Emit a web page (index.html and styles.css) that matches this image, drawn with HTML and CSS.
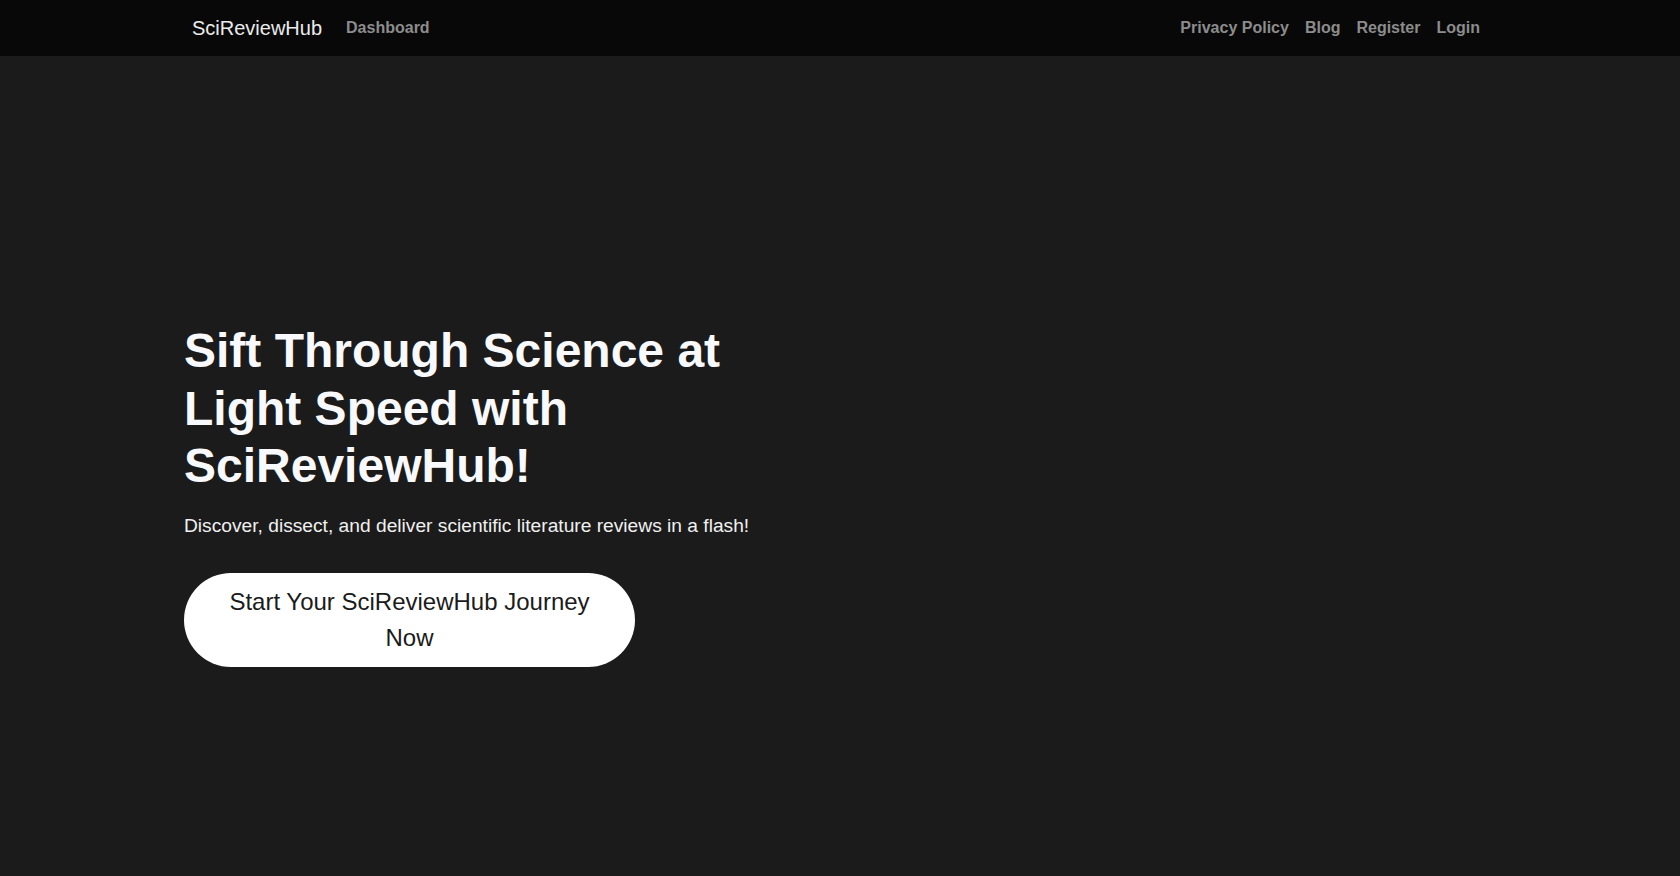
FILE: index.html
```html
<!DOCTYPE html>
<html lang="en">
<head>
<meta charset="utf-8">
<title>SciReviewHub</title>
<link rel="stylesheet" href="styles.css">
</head>
<body>
<nav class="navbar">
  <div class="nav-inner">
    <div class="nav-left">
      <a class="brand" href="#">SciReviewHub</a>
      <a class="nav-link" href="#">Dashboard</a>
    </div>
    <div class="nav-right">
      <a class="nav-link" href="#">Privacy Policy</a>
      <a class="nav-link" href="#">Blog</a>
      <a class="nav-link" href="#">Register</a>
      <a class="nav-link" href="#">Login</a>
    </div>
  </div>
</nav>
<main class="hero">
  <div class="hero-inner">
    <div class="hero-col">
      <h1 class="hero-title">Sift Through Science at Light Speed with SciReviewHub!</h1>
      <p class="hero-lead">Discover, dissect, and deliver scientific literature reviews in a flash!</p>
      <a class="hero-btn" href="#">Start Your SciReviewHub Journey Now</a>
    </div>
  </div>
</main>
</body>
</html>
```
FILE: styles.css
```css
* { box-sizing: border-box; }
html, body { margin: 0; padding: 0; }
body {
  background: #1b1b1b;
  font-family: "Liberation Sans", Arial, sans-serif;
  color: #f8f9fa;
  min-height: 876px;
}
a { text-decoration: none; }
.navbar {
  background: #080808;
  height: 56px;
}
.nav-inner {
  max-width: 1320px;
  margin: 0 auto;
  padding: 0 12px;
  height: 56px;
  display: flex;
  align-items: center;
  justify-content: space-between;
}
.nav-left, .nav-right {
  display: flex;
  align-items: center;
}
.brand {
  color: #ebebeb;
  font-size: 20px;
  line-height: 30px;
  margin-right: 16px;
}
.nav-link {
  color: #8c8c8c;
  font-weight: 700;
  font-size: 16px;
  line-height: 24px;
  padding: 8px;
}
.hero-inner {
  max-width: 1312px;
  margin: 0 auto;
  padding-top: 266px;
}
.hero-col {
  width: 620px;
}
.hero-title {
  margin: 0 0 17px;
  font-size: 48px;
  line-height: 1.2;
  font-weight: 700;
  color: #f8f9fc;
}
.hero-lead {
  margin: 0 0 32px;
  font-size: 19.2px;
  line-height: 28.8px;
  color: #f0f0f0;
}
.hero-btn {
  display: block;
  width: 451px;
  padding: 11px 42px;
  background: #ffffff;
  color: #1b1b1b;
  border-radius: 48px;
  text-align: center;
  font-size: 24px;
  line-height: 36px;
}
```
